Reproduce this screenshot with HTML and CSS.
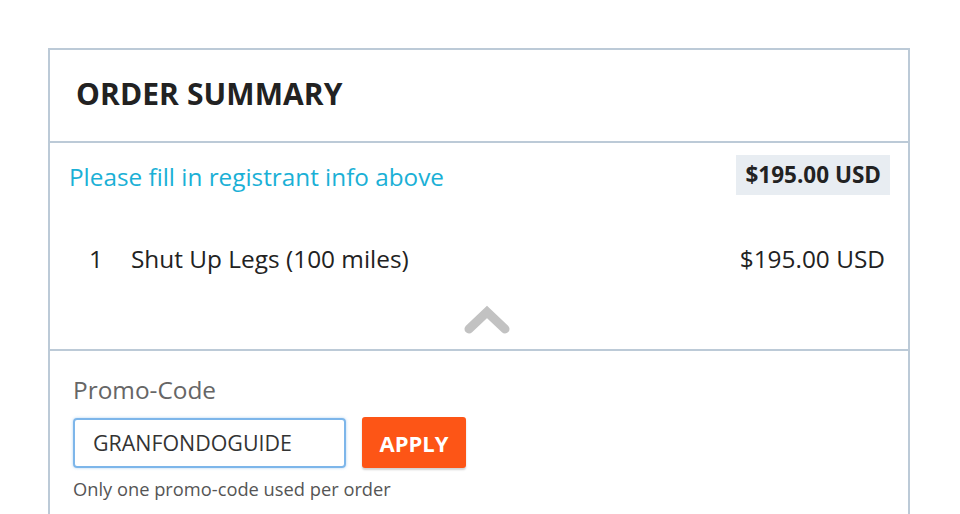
FILE: index.html
```html
<!DOCTYPE html>
<html>
<head>
<meta charset="utf-8">
<link rel="stylesheet" href="styles.css">
</head>
<body>
<div class="card">
  <div class="card-head">
    <h2 class="title">ORDER SUMMARY</h2>
  </div>
  <div class="summary">
    <div class="total-row">
      <span class="notice">Please fill in registrant info above</span>
      <span class="badge">$195.00 USD</span>
    </div>
    <div class="item-row">
      <span class="qty">1</span>
      <span class="name">Shut Up Legs (100 miles)</span>
      <span class="price">$195.00 USD</span>
    </div>
    <div class="toggle">
      <svg width="48" height="32" viewBox="0 0 48 32"><path d="M6 26 L24 9 L42 26" fill="none" stroke="#c2c2c2" stroke-width="9" stroke-linecap="round" stroke-linejoin="miter"/></svg>
    </div>
  </div>
  <div class="promo">
    <div class="promo-label">Promo-Code</div>
    <div class="promo-form">
      <div class="promo-input">GRANFONDOGUIDE</div>
      <button class="apply">APPLY</button>
    </div>
    <div class="promo-help">Only one promo-code used per order</div>
  </div>
</div>
</body>
</html>
```

FILE: styles.css
```css
html, body {
  margin: 0;
  padding: 0;
  background: #fff;
  font-family: "Open Sans", "Noto Sans", sans-serif;
  overflow: hidden;
}
body {
  padding: 48px 0 0 48px;
  height: 514px;
  box-sizing: border-box;
}
.card {
  width: 862px;
  height: 600px;
  box-sizing: border-box;
  border: 2px solid #bccad7;
}
.card-head {
  border-bottom: 2px solid #bccad7;
  display: flex;
  align-items: center;
  padding-left: 26px;
  padding-bottom: 4px;
  box-sizing: border-box;
  height: 93px;
}
.title {
  margin: 0;
  font-size: 30px;
  font-weight: 700;
  color: #222;
  letter-spacing: 0.1px;
}
.summary {
  height: 208px;
  border-bottom: 2px solid #bccad7;
  padding: 12px 18px 0 19px;
  box-sizing: border-box;
  display: flex;
  flex-direction: column;
}
.total-row {
  display: flex;
  justify-content: space-between;
  align-items: center;
  height: 40px;
}
.notice {
  color: #1ab0d6;
  font-size: 24.3px;
  margin-top: 2px;
}
.badge {
  background: #e8edf2;
  font-weight: 700;
  font-size: 22.5px;
  color: #222;
  height: 40px;
  line-height: 40px;
  padding: 0 9px;
}
.item-row {
  display: flex;
  align-items: center;
  margin-top: 48px;
  height: 30px;
  font-size: 24.4px;
  color: #222;
  padding-right: 5px;
}
.qty {
  margin-left: 20px;
  width: 42px;
}
.name {
  flex: 1;
}
.toggle {
  display: flex;
  justify-content: center;
  margin-top: 30px;
  padding-left: 14px;
}
.promo {
  padding: 24px 0 0 23px;
}
.promo-label {
  font-size: 24.4px;
  color: #666;
  line-height: 30px;
}
.promo-form {
  display: flex;
  align-items: center;
  gap: 16px;
  margin-top: 12px;
}
.promo-input {
  width: 273px;
  height: 50px;
  box-sizing: border-box;
  border: 2px solid #7db6ea;
  border-radius: 4px;
  box-shadow: 0 0 3px rgba(125, 182, 234, 0.6);
  font-size: 21.4px;
  color: #333;
  line-height: 46px;
  padding-left: 18px;
}
.apply {
  width: 104px;
  height: 51px;
  border: none;
  border-radius: 3px;
  background: #fd5516;
  color: #fff;
  font-family: "Open Sans", "Noto Sans", sans-serif;
  font-weight: 700;
  font-size: 22px;
  box-shadow: 0 2px 2px rgba(0, 0, 0, 0.18);
  padding: 0;
}
.promo-help {
  margin-top: 8px;
  font-size: 18.3px;
  line-height: 25px;
  color: #555;
}
```
